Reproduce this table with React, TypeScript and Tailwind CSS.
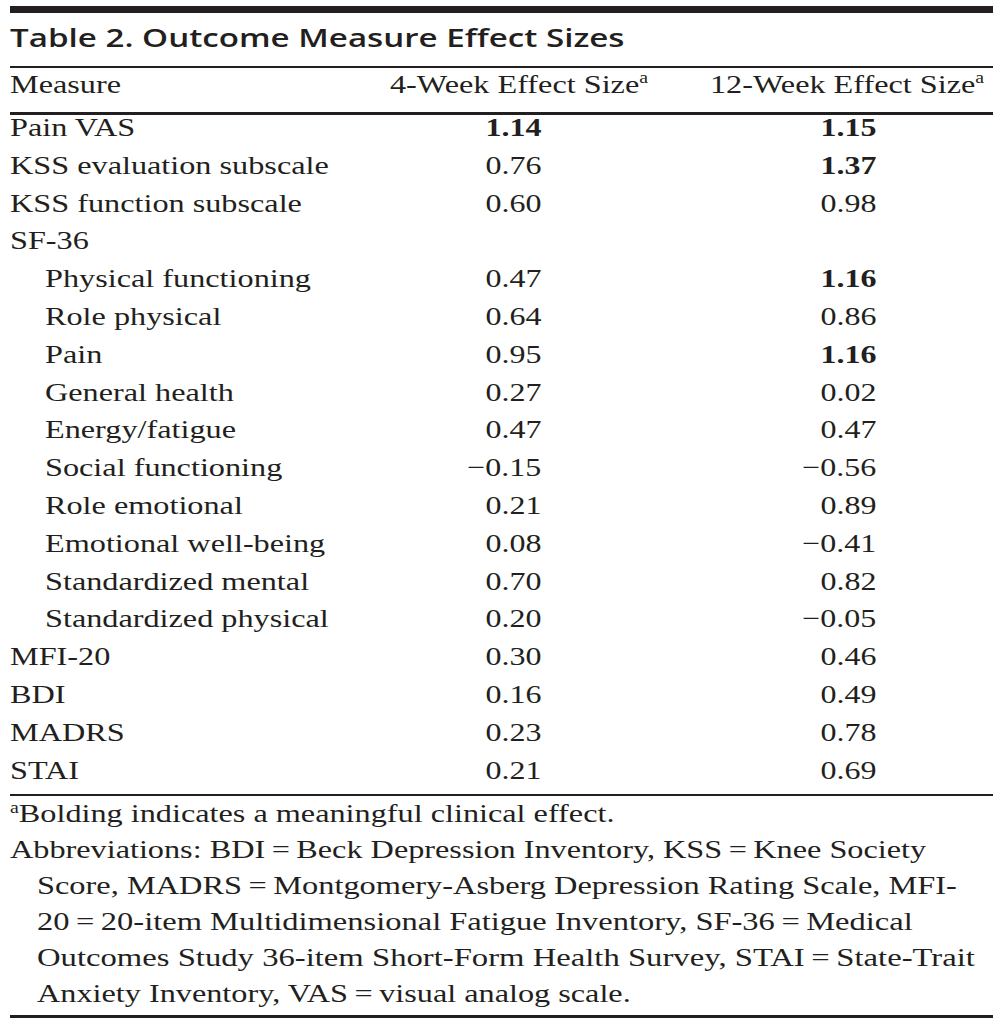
import React from "react";

type Row = { m: string; a?: string; ab?: boolean; b?: string; bb?: boolean; indent?: boolean };

const rows: Row[] = [
  { m: "Pain VAS", a: "1.14", ab: true, b: "1.15", bb: true },
  { m: "KSS evaluation subscale", a: "0.76", b: "1.37", bb: true },
  { m: "KSS function subscale", a: "0.60", b: "0.98" },
  { m: "SF-36" },
  { m: "Physical functioning", a: "0.47", b: "1.16", bb: true, indent: true },
  { m: "Role physical", a: "0.64", b: "0.86", indent: true },
  { m: "Pain", a: "0.95", b: "1.16", bb: true, indent: true },
  { m: "General health", a: "0.27", b: "0.02", indent: true },
  { m: "Energy/fatigue", a: "0.47", b: "0.47", indent: true },
  { m: "Social functioning", a: "\u22120.15", b: "\u22120.56", indent: true },
  { m: "Role emotional", a: "0.21", b: "0.89", indent: true },
  { m: "Emotional well-being", a: "0.08", b: "\u22120.41", indent: true },
  { m: "Standardized mental", a: "0.70", b: "0.82", indent: true },
  { m: "Standardized physical", a: "0.20", b: "\u22120.05", indent: true },
  { m: "MFI-20", a: "0.30", b: "0.46" },
  { m: "BDI", a: "0.16", b: "0.49" },
  { m: "MADRS", a: "0.23", b: "0.78" },
  { m: "STAI", a: "0.21", b: "0.69" },
];

const EQ = "\u2009=\u2009";

function L({ children, k = "a" }: { children: React.ReactNode; k?: "a" | "b" | "c" | "d" }) {
  const s =
    k === "b" ? "scale-x-[1.245]" : k === "c" ? "scale-x-[1.25]" : k === "d" ? "scale-x-[1.257]" : "scale-x-[1.24]";
  return <span className={`inline-block whitespace-nowrap origin-left ${s}`}>{children}</span>;
}

function R({ children, bold }: { children: React.ReactNode; bold?: boolean }) {
  return (
    <span className={`inline-block whitespace-nowrap origin-right scale-x-[1.23] ${bold ? "font-bold" : ""}`}>
      {children}
    </span>
  );
}

function Sup() {
  return <sup className="text-[16px] relative -top-[10px]">a</sup>;
}

export default function App() {
  return (
    <div className="w-[1004px] h-[1029px] bg-white text-[#231f20] overflow-hidden">
      <div className="ml-[10px] w-[983px] pt-[6px]">
        <div className="h-[7px] bg-[#231f20]" />
        <div
          className="pt-[8px] pb-[12px] text-[25px] leading-[33px] font-semibold"
          style={{ fontFamily: '"Open Sans", sans-serif' }}
        >
          <span className="inline-block whitespace-nowrap origin-left scale-x-[1.325]">
            Table 2. Outcome Measure Effect Sizes
          </span>
        </div>
        <div className="h-[2px] bg-[#231f20]" />
        <div className="text-[26px]" style={{ fontFamily: '"Liberation Serif", serif' }}>
          <div className="flex pt-[2px] pb-[12px] leading-[30px]">
            <div className="w-[380px]">
              <L>Measure</L>
            </div>
            <div className="w-[320px]">
              <L>
                4-Week Effect Size
                <Sup />
              </L>
            </div>
            <div>
              <L>
                12-Week Effect Size
                <Sup />
              </L>
            </div>
          </div>
          <div className="h-[3px] bg-[#231f20]" />
          <div className="flex flex-col gap-[11.8px] pb-[10px] leading-[26px]">
            {rows.map((r, i) => (
              <div key={i} className="flex">
                <div className={`w-[380px] ${r.indent ? "pl-[35px]" : ""}`}>
                  <L>{r.m}</L>
                </div>
                <div className="w-[320px]">
                  <div className="w-[151px] text-right">{r.a ? <R bold={r.ab}>{r.a}</R> : "\u00a0"}</div>
                </div>
                <div>
                  <div className="w-[166px] text-right">{r.b ? <R bold={r.bb}>{r.b}</R> : "\u00a0"}</div>
                </div>
              </div>
            ))}
          </div>
          <div className="h-[2px] bg-[#231f20]" />
          <div className="leading-[36px] pb-[3px]">
            <div>
              <L>
                <sup className="text-[16px] relative -top-[9px]">a</sup>Bolding indicates a meaningful clinical effect.
              </L>
            </div>
            <div>
              <L k="a">Abbreviations: BDI{EQ}Beck Depression Inventory, KSS{EQ}Knee Society</L>
            </div>
            <div className="pl-[27px]">
              <L k="b">Score, MADRS{EQ}Montgomery-Asberg Depression Rating Scale, MFI-</L>
            </div>
            <div className="pl-[27px]">
              <L k="c">20{EQ}20-item Multidimensional Fatigue Inventory, SF-36{EQ}Medical</L>
            </div>
            <div className="pl-[27px]">
              <L k="d">Outcomes Study 36-item Short-Form Health Survey, STAI{EQ}State-Trait</L>
            </div>
            <div className="pl-[27px]">
              <L k="a">Anxiety Inventory, VAS{EQ}visual analog scale.</L>
            </div>
          </div>
          <div className="h-[3px] bg-[#231f20]" />
        </div>
      </div>
    </div>
  );
}
